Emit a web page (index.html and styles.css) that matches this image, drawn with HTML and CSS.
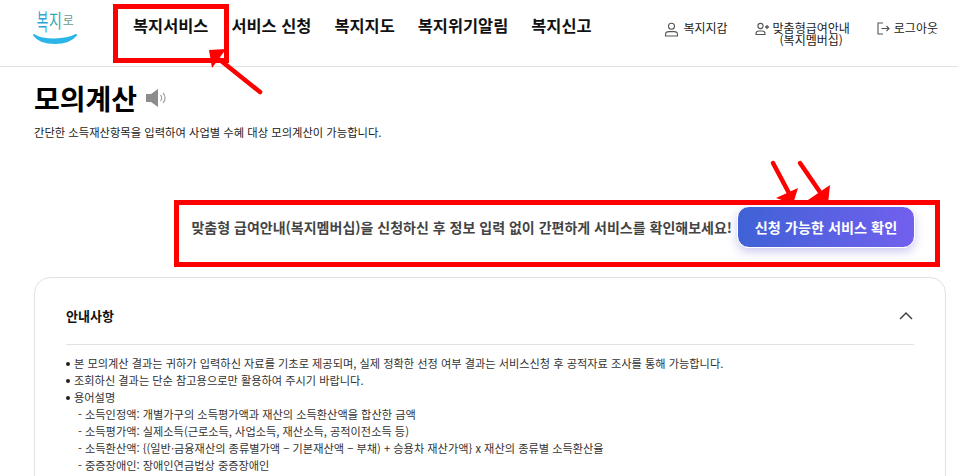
FILE: index.html
```html
<!DOCTYPE html>
<html lang="ko">
<head>
    <meta charset="UTF-8">
    <meta name="viewport" content="width=device-width, initial-scale=1.0">
    <title>모의계산</title>
    <link rel="stylesheet" href="styles.css">
</head>
<body>
    <!-- 상단 헤더 -->
    <header class="header">
        <a class="logo" href="#">
            <span class="logo-text"><span class="logo-bok">복</span><span class="logo-ji">지</span><span class="logo-ro">로</span></span>
            <svg class="logo-smile" width="46" height="12" viewBox="0 0 46 12">
                <path d="M2 2 C11 8 33 8 44 2 C39 8 31 10 23 10 C14 10 6 8 2 2 Z" fill="#2cb5e8" stroke="#2cb5e8" stroke-width="2" stroke-linejoin="round"/>
            </svg>
        </a>
        <nav class="gnb">
            <a href="#">복지서비스</a>
            <a href="#">서비스 신청</a>
            <a href="#">복지지도</a>
            <a href="#">복지위기알림</a>
            <a href="#">복지신고</a>
        </nav>
        <div class="util">
            <a class="util-item" href="#">
                <svg width="15" height="15" viewBox="0 0 15 15" fill="none" stroke="#555" stroke-width="1.1"><circle cx="7.5" cy="4.2" r="3"/><path d="M1.5 14 V12.5 C1.500 10.500 3 9.600 5 9.600 H10 C12 9.600 13.500 10.500 13.500 12.500 V14 Z"/></svg>
                <span>복지지갑</span>
            </a>
            <a class="util-item util-member" href="#">
                <svg width="14" height="14" viewBox="0 0 14 14" fill="none" stroke="#555" stroke-width="1.1"><circle cx="5.5" cy="4" r="2.6"/><path d="M1 12.5 V11.5 C1 9.800 2.400 9 4 9 H7 C8.600 9 10 9.800 10 11.500 V12.500 Z"/><path d="M10 5 H14 M12 3 V7" stroke-width="1.3"/></svg>
                <span>맞춤형급여안내<br>(복지멤버십)</span>
            </a>
            <a class="util-item" href="#">
                <svg width="13" height="13" viewBox="0 0 13 13" fill="none" stroke="#555" stroke-width="1.1"><path d="M6 1 H1 V12 H6"/><path d="M4.5 6.5 H12 M9.500 4 L12 6.500 L9.500 9"/></svg>
                <span>로그아웃</span>
            </a>
        </div>
    </header>

    <main class="content">
        <div class="title-row">
            <h1>모의계산</h1>
            <svg class="speaker" width="22" height="20" viewBox="0 0 22 20">
                <path d="M1 6 H6 L13 1 V19 L6 14 H1 Z" fill="#8c8c8c"/>
                <path d="M15.5 7 C17 8.500 17 11.500 15.500 13 M18 5 C20.500 8 20.500 12 18 15" fill="none" stroke="#a5a5a5" stroke-width="1.2"/>
            </svg>
        </div>
        <p class="desc">간단한 소득재산항목을 입력하여 사업별 수혜 대상 모의계산이 가능합니다.</p>

        <!-- 맞춤형 급여안내 배너 -->
        <div class="banner">
            <p>맞춤형 급여안내(복지멤버십)을 신청하신 후 정보 입력 없이 간편하게 서비스를 확인해보세요!</p>
            <button class="check-btn" type="button">신청 가능한 서비스 확인</button>
        </div>

        <!-- 안내사항 -->
        <section class="notice">
            <div class="notice-head">
                <h2>안내사항</h2>
                <svg width="16" height="10" viewBox="0 0 16 10" fill="none" stroke="#444" stroke-width="1.5"><path d="M2 8 L8 2 L14 8"/></svg>
            </div>
            <ul class="notice-list">
                <li>본 모의계산 결과는 귀하가 입력하신 자료를 기초로 제공되며, 실제 정확한 선정 여부 결과는 서비스신청 후 공적자료 조사를 통해 가능합니다.</li>
                <li>조회하신 결과는 단순 참고용으로만 활용하여 주시기 바랍니다.</li>
                <li>용어설명
                    <div class="term">- 소득인정액: 개별가구의 소득평가액과 재산의 소득환산액을 합산한 금액</div>
                    <div class="term">- 소득평가액: 실제소득(근로소득, 사업소득, 재산소득, 공적이전소득 등)</div>
                    <div class="term">- 소득환산액: {(일반·금융재산의 종류별가액 − 기본재산액 − 부채) + 승용차 재산가액} x 재산의 종류별 소득환산율</div>
                    <div class="term">- 중증장애인: 장애인연금법상 중증장애인</div>
                </li>
            </ul>
        </section>
    </main>

    <!-- 스크린샷 위에 그려진 빨간 표시 -->
    <svg class="marks" width="958" height="476" viewBox="0 0 958 476" fill="none">
        <rect x="115.500" y="6.500" width="111" height="54" stroke="#f00" stroke-width="5"/>
        <rect x="176.500" y="202.500" width="761" height="62" stroke="#f00" stroke-width="5"/>
        <g stroke="#f00" stroke-width="4.500" stroke-linecap="round">
            <path d="M260 92 L220 60"/>
            <path d="M773 163 L790 195"/>
            <path d="M800 163 L822 195"/>
        </g>
        <g fill="#f00">
            <path d="M209 50 L226 49 L212 68 Z"/>
            <path d="M776 198 L798 188 L793 204 Z"/>
            <path d="M808 200 L830 185 L828 204 Z"/>
        </g>
    </svg>
</body>
</html>
```

FILE: styles.css
```css
* {
    margin: 0;
    padding: 0;
    box-sizing: border-box;
}

html, body {
    height: 476px;
    overflow: hidden;
}

body {
    position: relative;
    font-family: "Noto Sans CJK KR", "Noto Sans", sans-serif;
    background-color: #fff;
    color: #111;
}

a {
    color: inherit;
    text-decoration: none;
}

.header {
    display: flex;
    align-items: flex-start;
    height: 67px;
    padding-left: 32px;
    border-bottom: 1px solid #e2e2e2;
}

.logo {
    display: flex;
    flex-direction: column;
    align-items: center;
    width: 46px;
    padding-top: 8px;
}

.logo-text {
    display: flex;
    align-items: center;
    height: 24px;
    font-size: 14px;
    line-height: 24px;
    white-space: nowrap;
}

.logo-bok {
    color: #2aa5d6;
    transform: scale(0.9, 1.6);
}

.logo-ji {
    color: #2ba8b4;
    transform: scaleY(1.35);
}

.logo-ro {
    color: #6b9a8e;
    font-size: 12px;
    margin-left: 1px;
}

.logo-smile {
    margin-top: 1px;
}

.gnb {
    display: flex;
    gap: 23px;
    margin-left: 55px;
    padding-top: 13px;
    font-size: 16.4px;
    line-height: 24px;
    font-weight: 700;
}

.util {
    display: flex;
    align-items: flex-start;
    margin-left: auto;
    padding: 19px 20px 0 0;
    font-size: 12px;
    line-height: 12px;
    color: #222;
}

.util-item {
    display: flex;
    align-items: flex-start;
    gap: 4px;
    margin-left: 27px;
    padding-top: 3px;
}

.util-member span {
    text-align: center;
}

.content {
    padding: 0 12px 0 34px;
}

.title-row {
    display: flex;
    align-items: center;
    gap: 8px;
    margin-top: 11px;
}

h1 {
    font-size: 28px;
    line-height: 40px;
    font-weight: 700;
    color: #000;
}

.desc {
    margin-top: 6px;
    font-size: 11.3px;
    line-height: 16px;
    color: #222;
}

.banner {
    display: flex;
    align-items: center;
    justify-content: flex-end;
    gap: 5px;
    margin-top: 66px;
    padding-right: 31px;
    height: 42px;
}

.banner p {
    font-size: 14px;
    font-weight: 700;
    color: #444;
}

.check-btn {
    width: 178px;
    height: 42px;
    border: 1px solid #fff;
    border-radius: 12px;
    font-family: inherit;
    font-size: 14.2px;
    font-weight: 700;
    color: #fff;
    background: linear-gradient(90deg, #3f62d6, #7260ee);
    box-shadow: 0 4px 10px rgba(90, 80, 200, 0.3);
}

.notice {
    margin-top: 29px;
    height: 300px;
    padding: 0 31px;
    border: 1px solid #e2e2e2;
    border-radius: 16px;
}

.notice-head {
    display: flex;
    align-items: center;
    justify-content: space-between;
    height: 67px;
    padding-top: 9px;
    border-bottom: 1px solid #e2e2e2;
}

.notice-head h2 {
    font-size: 13px;
    font-weight: 700;
}

.notice-list {
    list-style: none;
    margin-top: 10px;
    font-size: 11.2px;
    line-height: 17px;
    color: #333;
}

.notice-list li {
    position: relative;
    padding-left: 8px;
}

.notice-list li::before {
    content: "";
    position: absolute;
    left: 0;
    top: 7px;
    width: 4px;
    height: 4px;
    border-radius: 50%;
    background-color: #222;
}

.term {
    padding-left: 4px;
}

.marks {
    position: absolute;
    left: 0;
    top: 0;
    pointer-events: none;
}
```
